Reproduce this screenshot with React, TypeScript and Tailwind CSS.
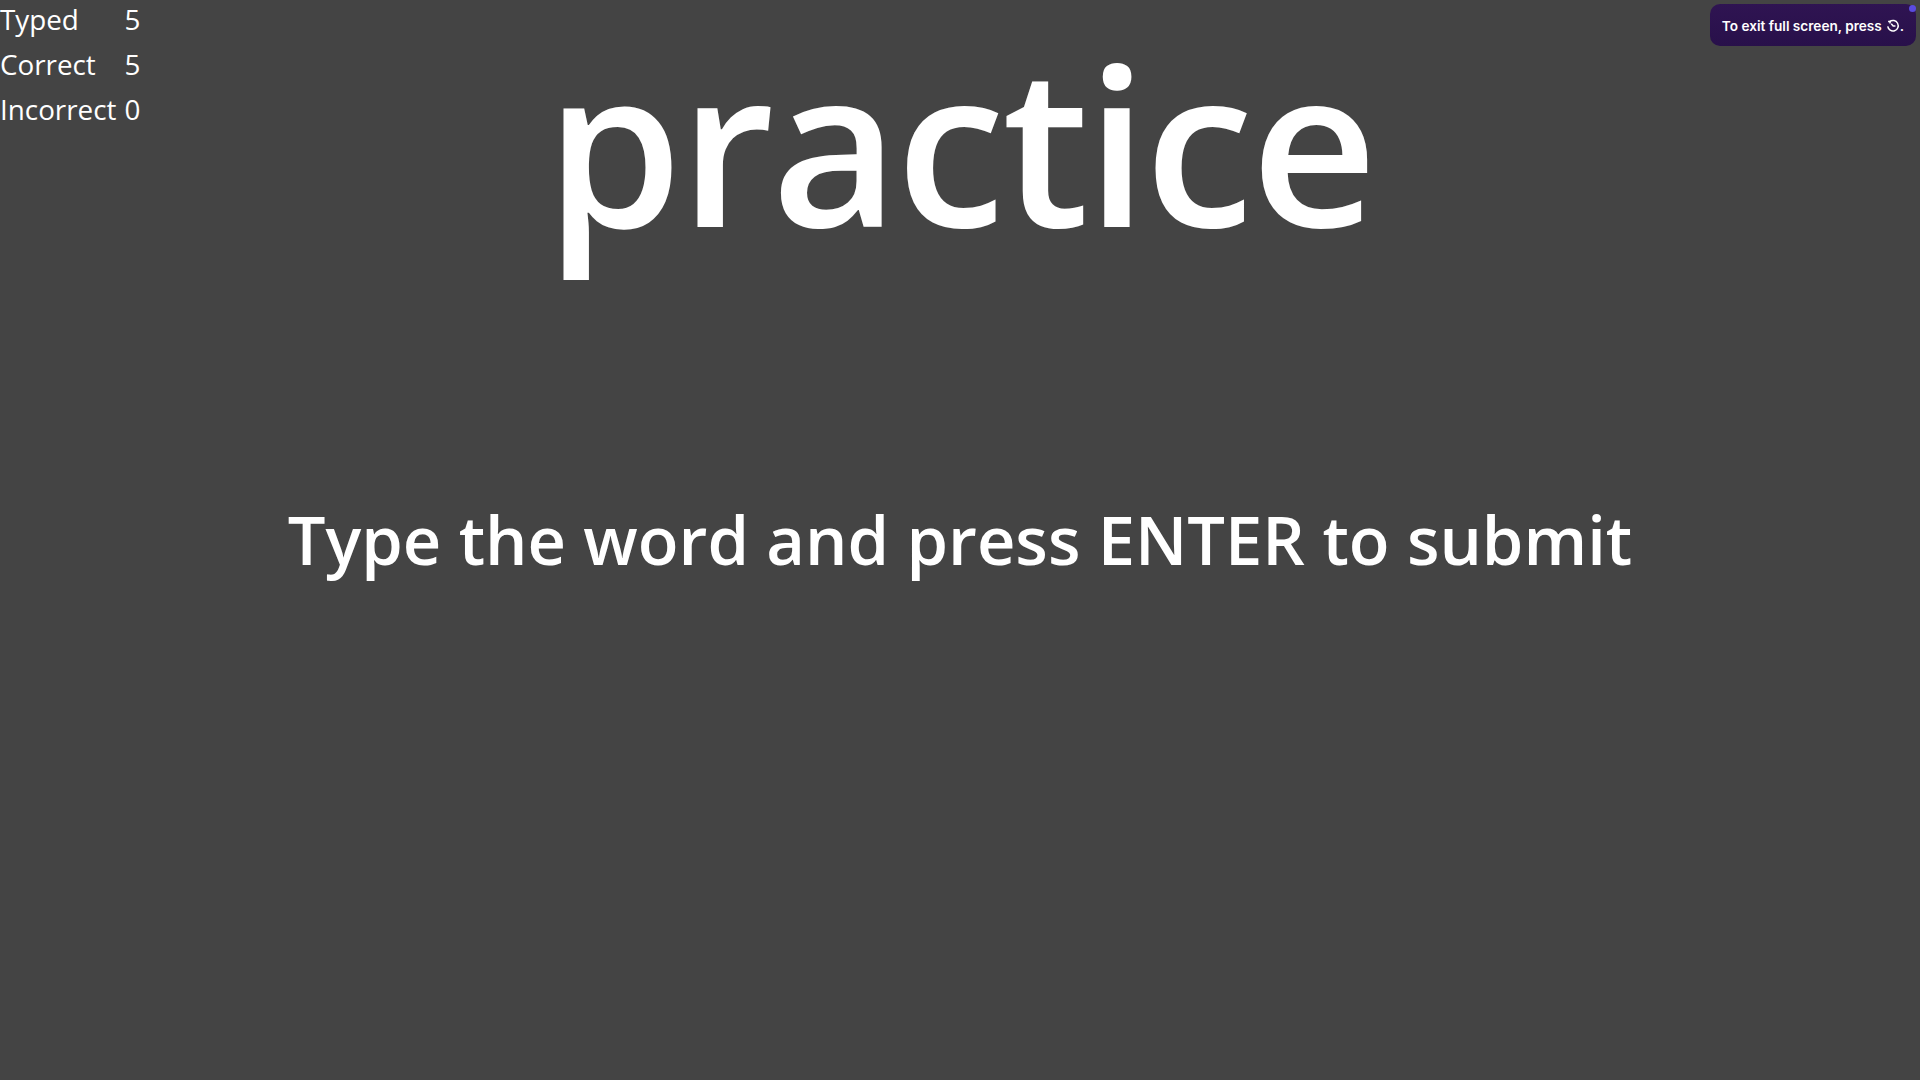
import React from "react";

const stats: [string, number][] = [
  ["Typed", 5],
  ["Correct", 5],
  ["Incorrect", 0],
];

export default function App() {
  return (
    <div className="relative h-[1080px] w-[1920px] overflow-hidden bg-[#444444] text-white font-['Open_Sans',sans-serif]">
      <div className="absolute left-0 top-0 grid -translate-y-[3px] grid-cols-[auto_auto] gap-x-2 text-[27.8px] leading-[45px]">
        {stats.map(([k, v]) => (
          <React.Fragment key={k}>
            <div>{k}</div>
            <div>{v}</div>
          </React.Fragment>
        ))}
      </div>
      <div className="flex flex-col items-center">
        <div className="mt-[2px] text-[220px] leading-[280px] font-semibold tracking-[-3px]">practice</div>
        <div className="mt-[209px] text-[66.8px] leading-[98px] font-semibold">Type the word and press ENTER to submit</div>
      </div>
      <div className="absolute right-[4px] top-[4px] flex h-[42px] w-[206px] items-center justify-center rounded-[10px] bg-[linear-gradient(#2f1452,#28104a)] pt-[2px] text-[13.6px] font-semibold font-['Inter',sans-serif]">
        <span>To exit full screen, press</span>
        <svg viewBox="0 0 16 16" className="ml-[4px] h-[14px] w-[14px]" fill="none" stroke="white" strokeWidth="1.7">
          <path d="M4.2 3 A6 6 0 1 1 2 8.5" />
          <path d="M2.4 2.8 L4.6 2.8 L4.6 5" />
          <path d="M6 5.5 L8.2 8 L10.8 8" />
        </svg>
        <span>.</span>
        <div className="absolute right-0 top-[1px] h-[7px] w-[7px] rounded-full bg-[#5a4be0]" />
      </div>
    </div>
  );
}
